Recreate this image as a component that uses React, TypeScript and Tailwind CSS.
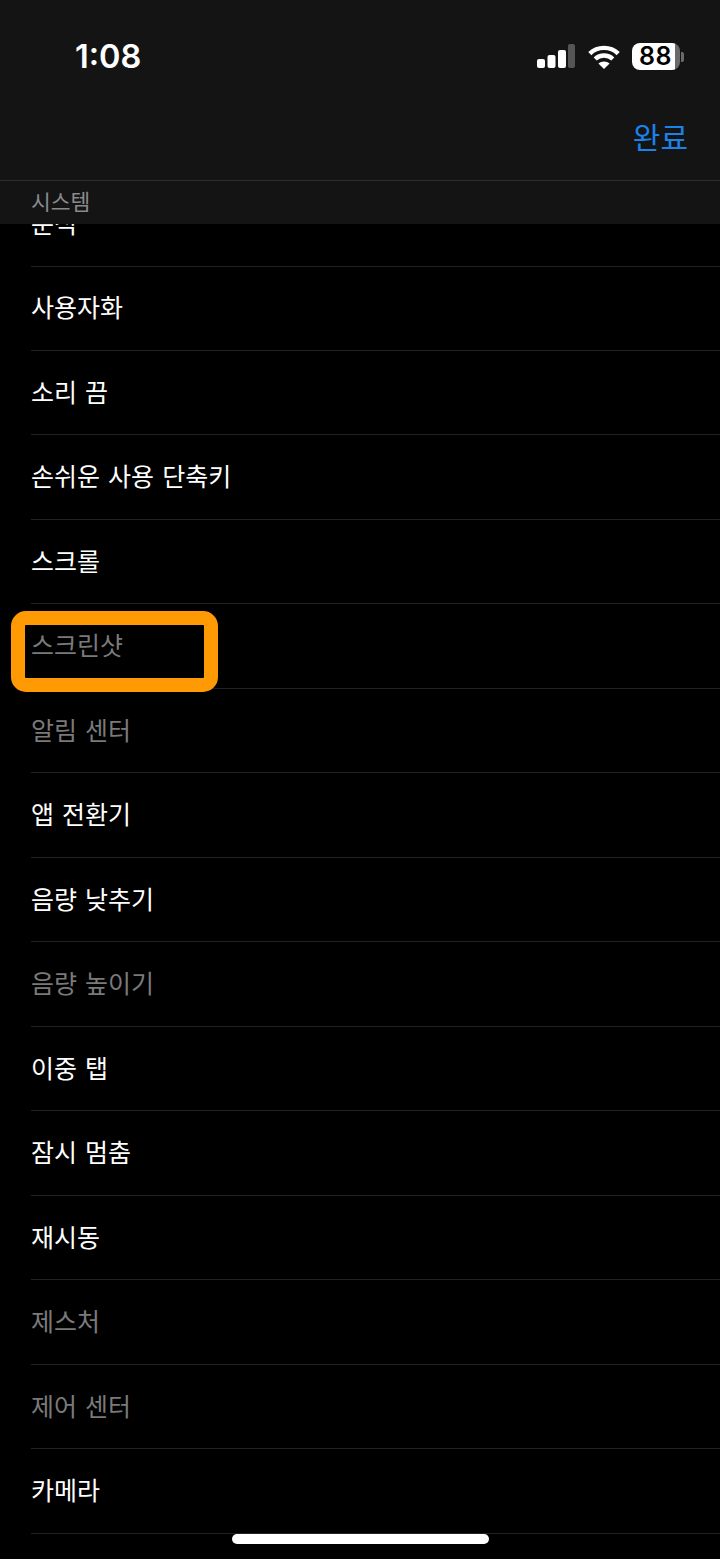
const FONT = "font-['Noto_Sans_CJK_KR','Noto_Sans',sans-serif]";

const ROWS = [
  { label: '사용자화' },
  { label: '소리 끔' },
  { label: '손쉬운 사용 단축키' },
  { label: '스크롤' },
  { label: '스크린샷', dim: true },
  { label: '알림 센터', dim: true },
  { label: '앱 전환기' },
  { label: '음량 낮추기' },
  { label: '음량 높이기', dim: true },
  { label: '이중 탭' },
  { label: '잠시 멈춤' },
  { label: '재시동' },
  { label: '제스처', dim: true },
  { label: '제어 센터', dim: true },
  { label: '카메라' },
];

function Signal() {
  return (
    <svg width="38" height="25" viewBox="0 0 38 25" className="block">
      <rect x="0" y="15" width="8" height="9" rx="2" fill="#fff" />
      <rect x="10.5" y="11" width="8" height="13" rx="2" fill="#fff" />
      <rect x="21" y="6" width="8" height="18" rx="2" fill="#fff" />
      <rect x="31" y="0" width="7" height="24" rx="2" fill="#555" />
    </svg>
  );
}

function Wifi() {
  return (
    <svg width="32" height="24" viewBox="0 0 32 24" className="block" fill="none" stroke="#fff" strokeWidth="4.4">
      <path d="M1.8 8.6C9.6 1 22.4 1 30.2 8.6" />
      <path d="M7.2 14C12 9.3 20 9.3 24.8 14" />
      <path d="M16 24 10.4 18.6C13.4 15.8 18.6 15.8 21.6 18.6Z" fill="#fff" stroke="none" />
    </svg>
  );
}

function Battery() {
  return (
    <div className="flex items-center gap-[1px]">
      <div className="flex h-[27px] w-[48px] items-center rounded-[8px] bg-[linear-gradient(to_right,#fff_43px,#6a6a6a_43px)] pl-[7px]">
        <span className="font-['Inter',sans-serif] text-[25px] font-semibold leading-none tracking-[0.5px] text-black">88</span>
      </div>
      <div className="h-[10px] w-[3px] rounded-r-[2px] bg-[#6a6a6a]" />
    </div>
  );
}

function Header() {
  return (
    <header className="h-[224px] bg-[#141414]">
      <div className="h-[181px] border-b border-[#2e2e2e]">
        <div className="flex items-start justify-between pl-[75px] pr-[36px] pt-[38px]">
          <span className="font-['Inter',sans-serif] text-[32.5px] font-semibold leading-[38px] text-white">1:08</span>
          <div className="flex items-center gap-[12.5px] pt-[5px]">
            <Signal />
            <Wifi />
            <Battery />
          </div>
        </div>
        <div className="mt-[38px] pr-[32px] text-right">
          <span className="text-[30px] leading-[44px] text-[#1a82e8]">완료</span>
        </div>
      </div>
      <div className="pl-[31px] pt-[4px] text-[21.5px] leading-[32px] text-[#8a8a8e]">시스템</div>
    </header>
  );
}

function Row({ label, dim }: { label: string; dim?: boolean }) {
  return (
    <div className={`flex h-[84.47px] items-center border-b border-[#222] pb-[2px] text-[25px] [word-spacing:2.5px] ${dim ? 'text-[#7a7a7a]' : 'text-white'}`}>
      {label}
    </div>
  );
}

export default function App() {
  return (
    <div className={`relative h-[1559px] w-[720px] overflow-hidden bg-black ${FONT}`}>
      <Header />
      <div className="ml-[31px]">
        {/* first row is cut off by the sticky section header */}
        <div className="h-[42.5px] overflow-hidden border-b border-[#222]">
          <div className="mt-[-42px] flex h-[84px] items-center pb-[2px] text-[25px] text-white">분석</div>
        </div>
        {ROWS.map(r => (
          <Row key={r.label} label={r.label} dim={r.dim} />
        ))}
      </div>
      <div className="absolute left-[11px] top-[611px] h-[81px] w-[207px] rounded-[15px] border-[14px] border-[#ff9a05]" />
      <div className="absolute left-[232px] top-[1534px] h-[10px] w-[257px] rounded-full bg-white" />
    </div>
  );
}
